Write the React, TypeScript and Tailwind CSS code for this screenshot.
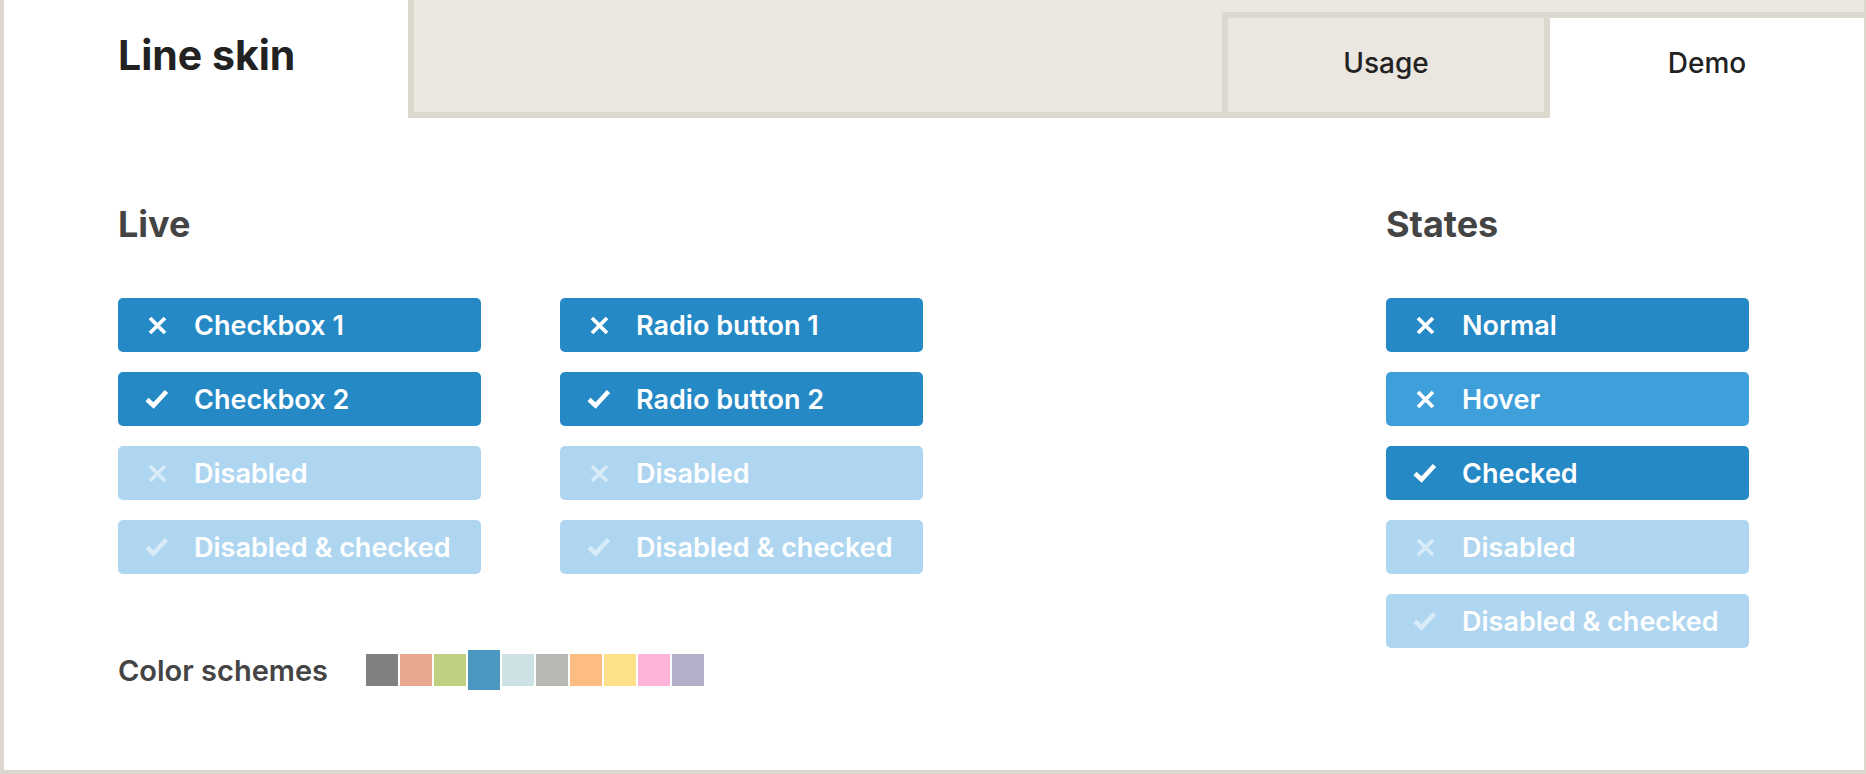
import React from 'react';

type Variant = 'normal' | 'hover' | 'disabled';

interface Item {
  label: string;
  checked?: boolean;
  variant?: Variant;
}

const checkboxes: Item[] = [
  { label: 'Checkbox 1' },
  { label: 'Checkbox 2', checked: true },
  { label: 'Disabled', variant: 'disabled' },
  { label: 'Disabled & checked', checked: true, variant: 'disabled' },
];

const radios: Item[] = [
  { label: 'Radio button 1' },
  { label: 'Radio button 2', checked: true },
  { label: 'Disabled', variant: 'disabled' },
  { label: 'Disabled & checked', checked: true, variant: 'disabled' },
];

const states: Item[] = [
  { label: 'Normal' },
  { label: 'Hover', variant: 'hover' },
  { label: 'Checked', checked: true },
  { label: 'Disabled', variant: 'disabled' },
  { label: 'Disabled & checked', checked: true, variant: 'disabled' },
];

const schemes = [
  '#808080',
  '#e8a78e',
  '#bdd180',
  '#4a98bf',
  '#cee1e5',
  '#b8b7b4',
  '#ffbc80',
  '#ffe08a',
  '#ffb3d9',
  '#b5aec8',
];

const bgByVariant: Record<Variant, string> = {
  normal: 'bg-[#2589c6]',
  hover: 'bg-[#3e9fda]',
  disabled: 'bg-[#afd6f0]',
};

function CrossIcon() {
  return (
    <svg width="19" height="19" viewBox="0 0 19 19" fill="none" stroke="currentColor" strokeWidth="3.8">
      <path d="M2 2 L17 17 M17 2 L2 17" />
    </svg>
  );
}

function CheckIcon() {
  return (
    <svg width="24" height="20" viewBox="0 0 24 20" fill="none" stroke="currentColor" strokeWidth="4.6">
      <path d="M2 10.5 L8.5 16.5 L21.5 2.5" />
    </svg>
  );
}

function SkinButton({ item }: { item: Item }) {
  const variant = item.variant ?? 'normal';
  const disabled = variant === 'disabled';
  return (
    <div
      className={`flex h-[54px] w-[363px] items-center rounded-[5px] pl-[27px] ${bgByVariant[variant]}`}
    >
      <span
        className={`flex w-[24px] justify-center ${disabled ? 'text-[#d7ebf8]' : 'text-white'}`}
      >
        {item.checked ? <CheckIcon /> : <CrossIcon />}
      </span>
      <span className="ml-[25px] text-[27px] leading-none font-semibold text-white">
        {item.label}
      </span>
    </div>
  );
}

function ButtonColumn({ items }: { items: Item[] }) {
  return (
    <div className="flex flex-col gap-[20px]">
      {items.map((item) => (
        <SkinButton key={item.label} item={item} />
      ))}
    </div>
  );
}

export default function App() {
  return (
    <div className="flex h-[774px] w-full flex-col border-r-2 border-b-4 border-l-4 border-[#dcd8cd] bg-white font-[family-name:Inter,sans-serif]">
      <header className="flex h-[118px]">
        <div className="w-[404px] pt-[35px] pl-[114px]">
          <h1 className="text-[41px] leading-none font-bold text-[#222]">Line skin</h1>
        </div>
        <div className="flex flex-1 border-b-[6px] border-l-[6px] border-[#dcd8cd] bg-[#ebe7e0]">
          <div className="mt-[12px] ml-auto h-[100px] w-[328px] border-x-[6px] border-t-[6px] border-[#dcd8cd] bg-[#ebe7e0] pt-[31px] text-center text-[28px] leading-none font-medium text-[#222]">
            Usage
          </div>
        </div>
        <div className="w-[314px] bg-[#ebe7e0] pt-[12px]">
          <div className="h-full border-t-[6px] border-[#dcd8cd] bg-white pt-[31px] text-center text-[28px] leading-none font-medium text-[#222]">
            Demo
          </div>
        </div>
      </header>

      <main className="flex justify-between pt-[88px] pr-[115px] pl-[114px]">
        <section>
          <h2 className="text-[36px] leading-none font-bold text-[#444]">Live</h2>
          <div className="mt-[56px] flex gap-[79px]">
            <ButtonColumn items={checkboxes} />
            <ButtonColumn items={radios} />
          </div>
          <div className="mt-[76px] flex h-[40px] items-center">
            <span className="w-[248px] text-[29px] leading-none font-semibold text-[#444]">
              Color schemes
            </span>
            <div className="flex items-center gap-[2px]">
              {schemes.map((color, i) => (
                <span
                  key={color}
                  className={`w-[32px] ${i === 3 ? 'h-[40px]' : 'h-[32px]'}`}
                  style={{ backgroundColor: color }}
                />
              ))}
            </div>
          </div>
        </section>

        <section>
          <h2 className="text-[36px] leading-none font-bold text-[#444]">States</h2>
          <div className="mt-[56px]">
            <ButtonColumn items={states} />
          </div>
        </section>
      </main>
    </div>
  );
}
